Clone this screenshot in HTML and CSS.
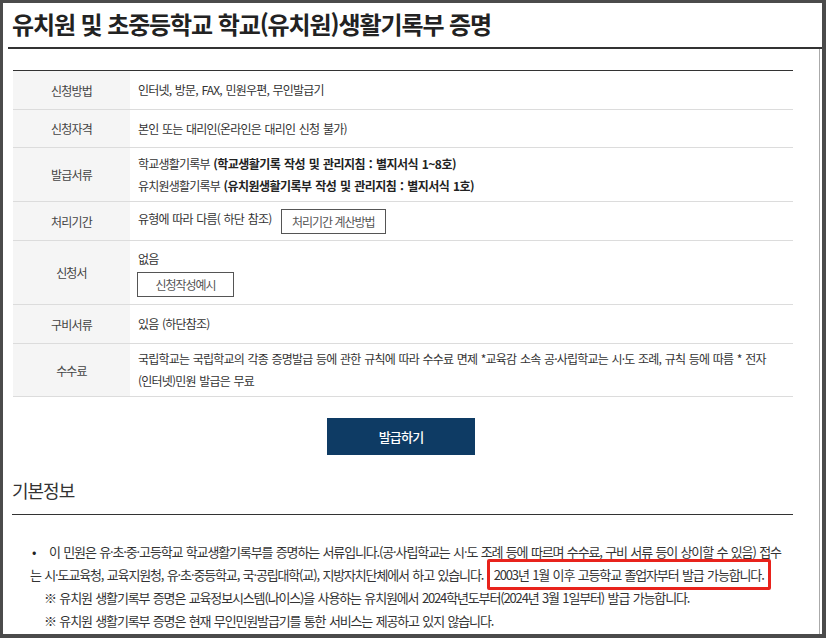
FILE: index.html
```html
<!DOCTYPE html>
<html lang="ko">
<head>
    <meta charset="UTF-8">
    <meta name="viewport" content="width=device-width, initial-scale=1.0">
    <title>학교생활기록부 증명</title>
    <link rel="stylesheet" href="styles.css">
</head>
<body>
    <div class="frame">
        <header class="page-head">
            <h2>유치원 및 초중등학교 학교(유치원)생활기록부 증명</h2>
        </header>

        <div class="content">
            <table class="info-table">
                <tr class="row-1">
                    <th>신청방법</th>
                    <td>인터넷, 방문, FAX, 민원우편, 무인발급기</td>
                </tr>
                <tr class="row-s">
                    <th>신청자격</th>
                    <td>본인 또는 대리인(온라인은 대리인 신청 불가)</td>
                </tr>
                <tr class="row-2">
                    <th>발급서류</th>
                    <td>
                        학교생활기록부 <strong>(학교생활기록 작성 및 관리지침 : 별지서식 1~8호)</strong><br>
                        유치원생활기록부 <strong>(유치원생활기록부 작성 및 관리지침 : 별지서식 1호)</strong>
                    </td>
                </tr>
                <tr class="row-1">
                    <th>처리기간</th>
                    <td>유형에 따라 다름( 하단 참조) <a href="#" class="line-btn">처리기간 계산방법</a></td>
                </tr>
                <tr class="row-form">
                    <th>신청서</th>
                    <td>
                        <div>없음</div>
                        <a href="#" class="line-btn wide">신청작성예시</a>
                    </td>
                </tr>
                <tr class="row-1">
                    <th>구비서류</th>
                    <td>있음 (하단참조)</td>
                </tr>
                <tr class="row-2b">
                    <th>수수료</th>
                    <td>국립학교는 국립학교의 각종 증명발급 등에 관한 규칙에 따라 수수료 면제 *교육감 소속 공·사립학교는 시·도 조례, 규칙 등에 따름 * 전자(인터넷)민원 발급은 무료</td>
                </tr>
            </table>

            <div class="btn-area">
                <a href="#" class="issue-btn">발급하기</a>
            </div>

            <h3 class="section-title">기본정보</h3>

            <ul class="notice">
                <li>
                    <span class="dot">•</span>이 민원은 유·초·중·고등학교 학교생활기록부를 증명하는 서류입니다.(공·사립학교는 시·도 조례 등에 따르며 수수료, 구비 서류 등이 상이할 수 있음) 접수는 시·도교육청, 교육지원청, 유·초·중등학교, 국·공립대학(교), 지방자치단체에서 하고 있습니다. <span class="mark">2003년 1월 이후 고등학교 졸업자부터 발급 가능합니다.</span>
                </li>
                <li class="ref">※ 유치원 생활기록부 증명은 교육정보시스템(나이스)을 사용하는 유치원에서 2024학년도부터(2024년 3월 1일부터) 발급 가능합니다.</li>
                <li class="ref">※ 유치원 생활기록부 증명은 현재 무인민원발급기를 통한 서비스는 제공하고 있지 않습니다.</li>
            </ul>
        </div>
    </div>
</body>
</html>
```

FILE: styles.css
```css
/* 생활기록부 증명 안내 */
html, body {
    height: 100%;
}

body {
    margin: 0;
    background-color: #4b4b4b;
    font-family: "Noto Sans CJK KR", "Noto Sans", sans-serif;
    color: #333;
    overflow: hidden;
}

.frame {
    margin: 3px 4px 0 3px;
    height: 631px;
    background-color: #fff;
    overflow: hidden;
}

.page-head {
    height: 44px;
    border-bottom: 2px solid #333;
    margin-left: 5px;
}

.page-head h2 {
    margin: 0;
    padding: 4px 0 0 4px;
    font-size: 24px;
    font-weight: 700;
    line-height: 34px;
    letter-spacing: -1.1px;
    color: #222;
}

.content {
    height: 585px;
    margin-right: 2px;
    border-right: 1px solid #aaa;
    padding: 21px 0 0 10px;
}

.info-table {
    width: 780px;
    border-collapse: collapse;
    border-top: 1px solid #333;
    border-bottom: 1px solid #333;
    font-size: 12px;
    letter-spacing: -0.8px;
    word-spacing: 1px;
}

.info-table th,
.info-table td {
    border-bottom: 1px solid #dcdcdc;
    padding: 0;
    vertical-align: middle;
}

.info-table th {
    width: 117px;
    background-color: #f5f5f5;
    font-weight: 400;
    color: #444;
    text-align: center;
}

.info-table td {
    padding: 0 24px 0 8px;
    line-height: 22px;
}

.info-table td strong {
    font-weight: 700;
    letter-spacing: -0.55px;
    color: #222;
}

.row-1 {
    height: 39px;
}

.row-s {
    height: 38px;
}

.row-2 {
    height: 54px;
}

.row-2b {
    height: 53px;
}

.row-form {
    height: 64px;
}

.line-btn {
    display: inline-block;
    height: 23px;
    line-height: 23px;
    padding: 0 10px;
    margin-left: 6px;
    border: 1px solid #555;
    color: #555;
    text-decoration: none;
    font-size: 12px;
    letter-spacing: -1px;
    word-spacing: 0;
    vertical-align: middle;
}

.line-btn.wide {
    width: 75px;
    margin: 2px 0 0 -1px;
    text-align: center;
}

.btn-area {
    width: 776px;
    margin-top: 21px;
    text-align: center;
}

.issue-btn {
    display: inline-block;
    width: 148px;
    height: 37px;
    line-height: 37px;
    background-color: #0e3b64;
    color: #fff;
    font-size: 13px;
    font-weight: 500;
    letter-spacing: -0.8px;
    text-decoration: none;
}

.section-title {
    width: 781px;
    margin: 22px 0 0 -1px;
    padding-bottom: 11px;
    border-bottom: 1px solid #333;
    font-size: 18px;
    font-weight: 400;
    line-height: 26px;
    letter-spacing: -1px;
    color: #333;
}

.notice {
    list-style: none;
    margin: 25px 0 0;
    padding: 0 0 0 17px;
    width: 752px;
    font-size: 13px;
    line-height: 23px;
    letter-spacing: -1.15px;
    word-spacing: 1px;
    color: #333;
}

.notice .dot {
    display: inline-block;
    width: 17px;
    margin-left: 2px;
    color: #222;
}

.notice .ref {
    padding-left: 14px;
}

.mark {
    border: 3px solid #e8231c;
    border-radius: 2px;
    padding: 3px 4px;
}
```
